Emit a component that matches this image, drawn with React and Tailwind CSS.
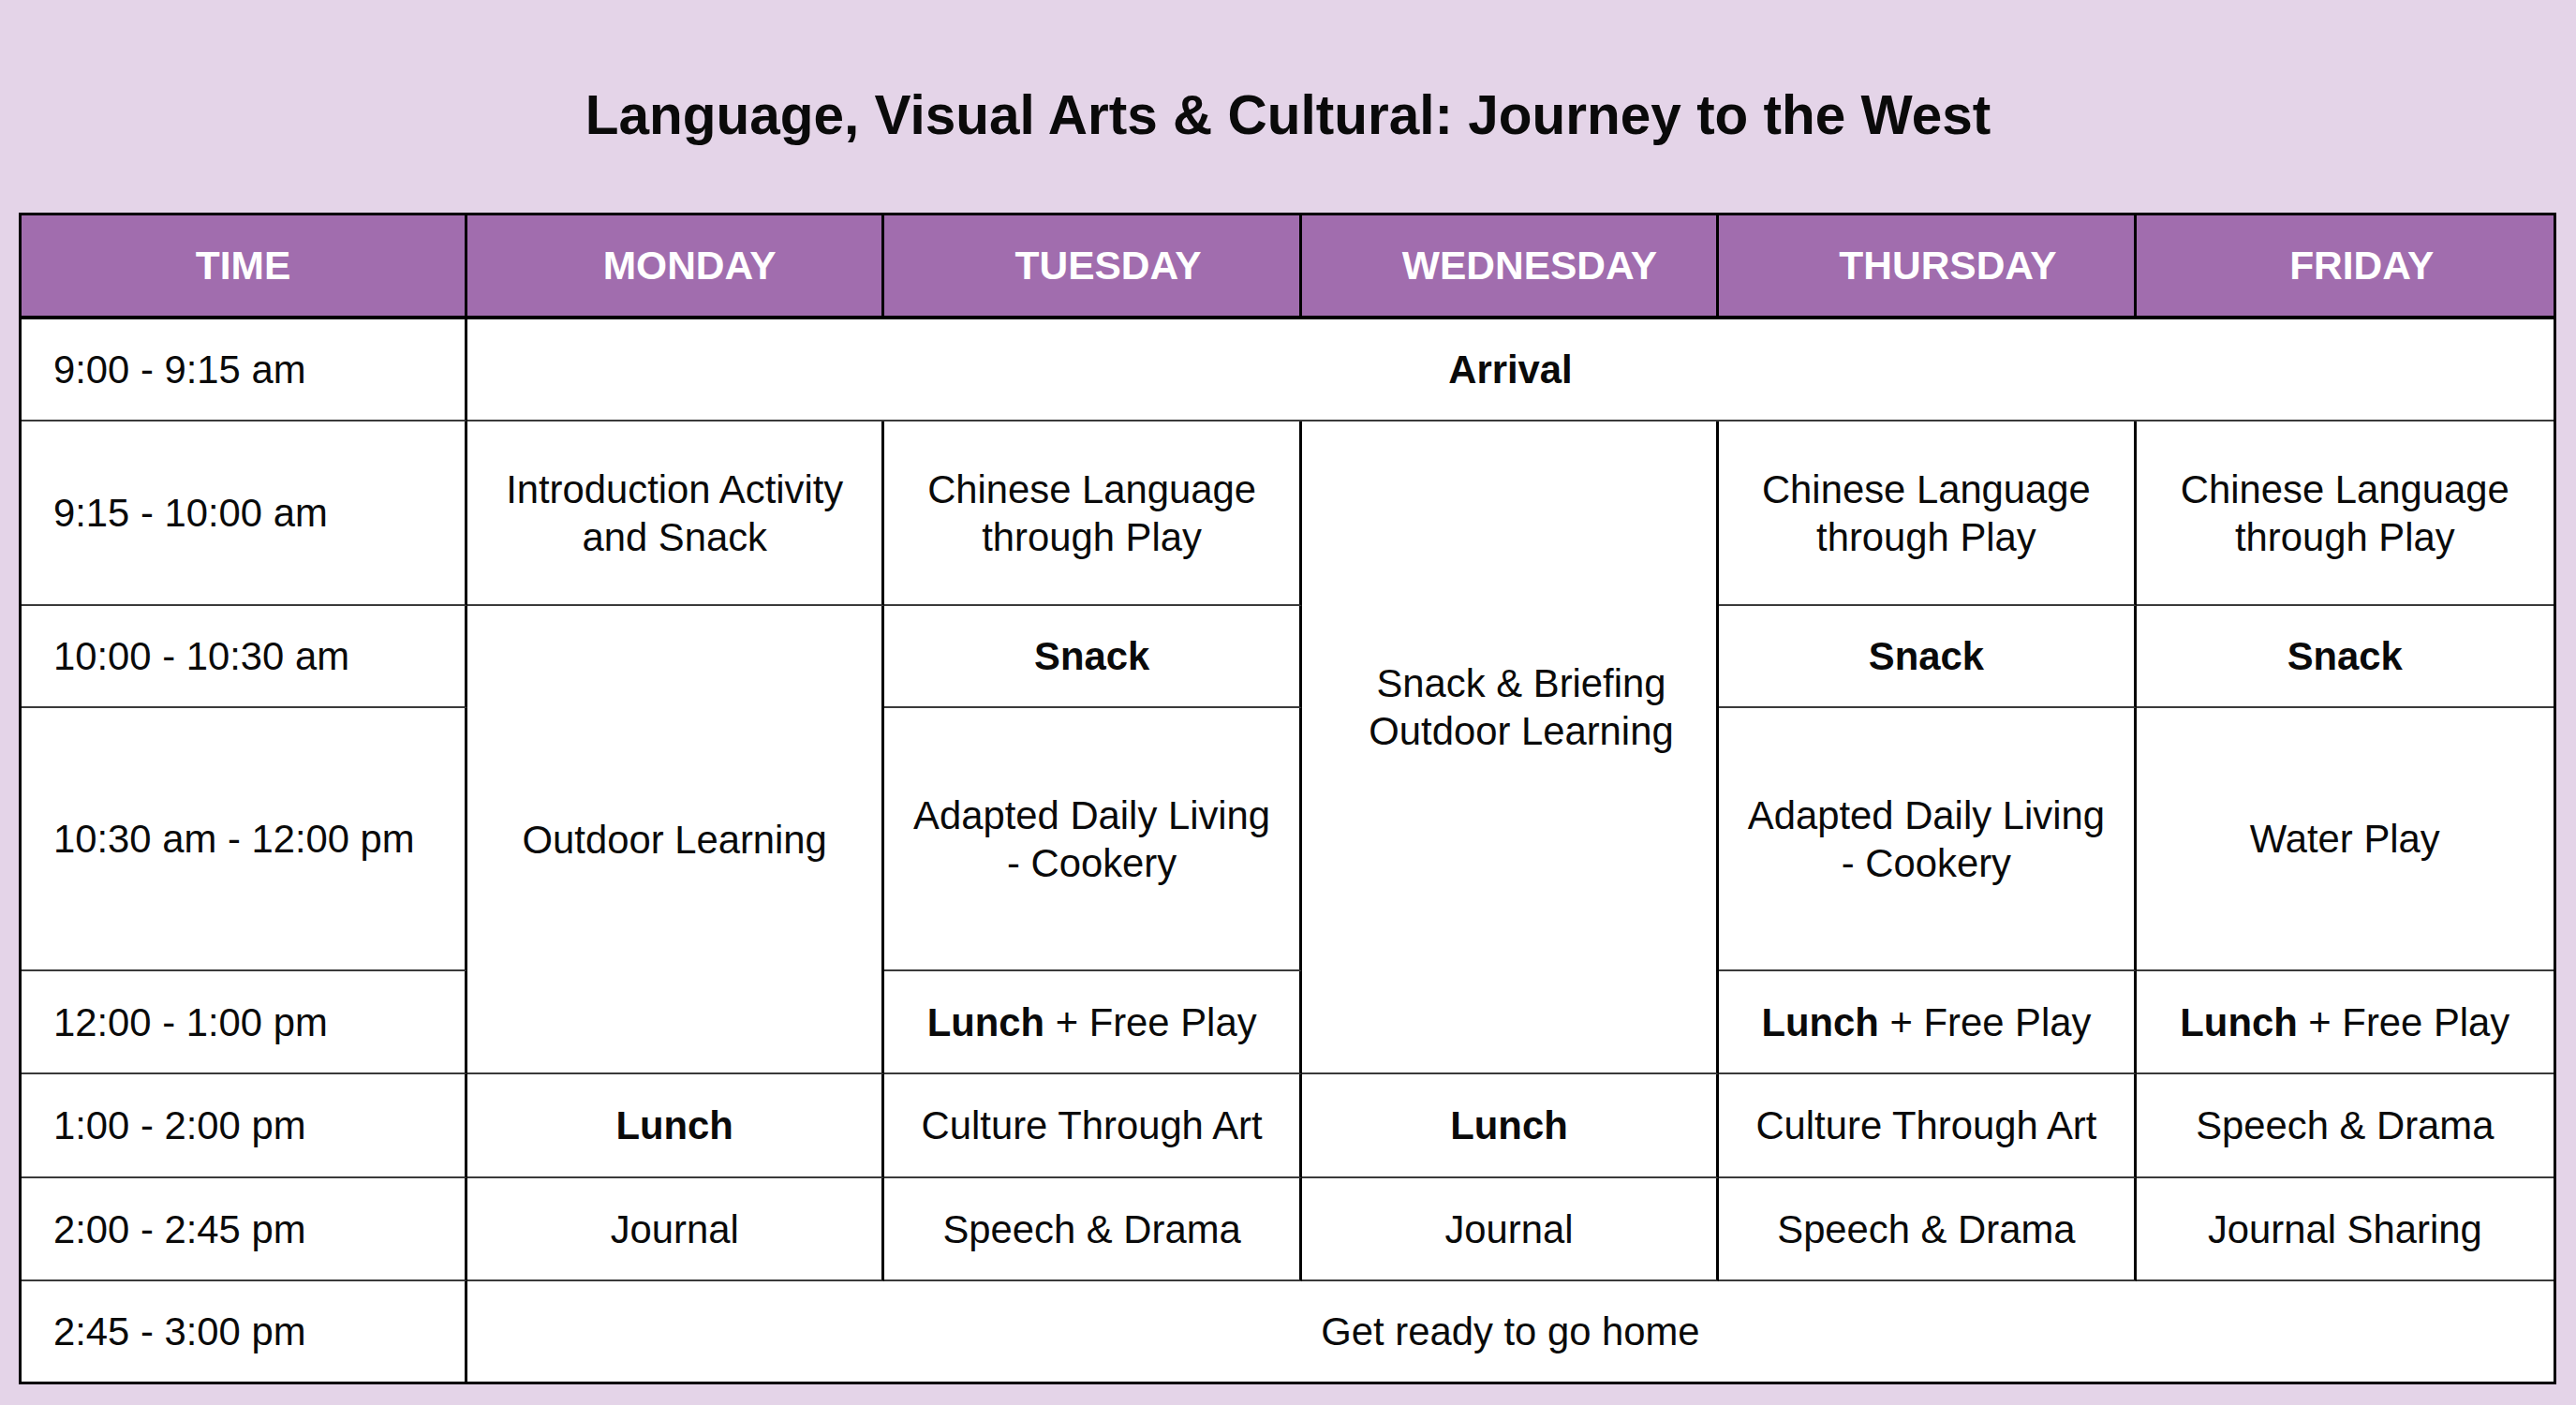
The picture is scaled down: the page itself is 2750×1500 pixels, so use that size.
export default function App() {
  const cell =
    "flex items-center justify-center text-center border-b-2 border-b-[#3a3a3a] border-r-[3px] border-r-black";
  const cellLast =
    "flex items-center justify-center text-center border-b-2 border-b-[#3a3a3a]";
  const time =
    "flex items-center pl-[34px] border-b-2 border-b-[#3a3a3a] border-r-[3px] border-r-black";
  const head =
    "bg-[#a16dae] text-white font-bold text-[42.5px] flex items-center justify-center border-b-[4px] border-b-black border-r-[3px] border-r-black";
  const headLast =
    "bg-[#a16dae] text-white font-bold text-[42.5px] flex items-center justify-center border-b-[4px] border-b-black";

  return (
    <div className="w-[2750px] h-[1500px] overflow-hidden bg-[#e4d4e8] font-['Liberation_Sans',Arial,sans-serif] text-[#0a0a0a] pt-[90px]">
      <h1 className="text-center text-[58.5px] leading-[66px] font-bold">
        Language, Visual Arts &amp; Cultural: Journey to the West
      </h1>
      <div className="ml-[20px] mt-[71px] w-[2709px] grid grid-cols-[476px_repeat(5,minmax(0,1fr))] grid-rows-[111px_109px_197px_109px_281px_110px_111px_110px_107px] border-[3px] border-black bg-white text-[41.8px] leading-[51px]">
        {/* Header */}
        <div className={head}>TIME</div>
        <div className={head + " pl-[32px]"}>MONDAY</div>
        <div className={head + " pl-[35px]"}>TUESDAY</div>
        <div className={head + " pl-[44px]"}>WEDNESDAY</div>
        <div className={head + " pl-[46px]"}>THURSDAY</div>
        <div className={headLast + " pl-[36px]"}>FRIDAY</div>

        {/* Row 1 */}
        <div className={time}>9:00 - 9:15 am</div>
        <div className={cellLast + " col-span-5 font-bold"}>Arrival</div>

        {/* Row 2 */}
        <div className={time}>9:15 - 10:00 am</div>
        <div className={cell}>
          Introduction Activity
          <br />
          and Snack
        </div>
        <div className={cell}>
          Chinese Language
          <br />
          through Play
        </div>
        <div className={cell + " row-span-4 pb-[86px] pl-[26px]"}>
          Snack &amp; Briefing
          <br />
          Outdoor Learning
        </div>
        <div className={cell}>
          Chinese Language
          <br />
          through Play
        </div>
        <div className={cellLast}>
          Chinese Language
          <br />
          through Play
        </div>

        {/* Row 3 */}
        <div className={time}>10:00 - 10:30 am</div>
        <div className={cell + " row-span-3"}>Outdoor Learning</div>
        <div className={cell + " font-bold"}>Snack</div>
        <div className={cell + " font-bold"}>Snack</div>
        <div className={cellLast + " font-bold"}>Snack</div>

        {/* Row 4 */}
        <div className={time}>10:30 am - 12:00 pm</div>
        <div className={cell}>
          Adapted Daily Living
          <br />
          - Cookery
        </div>
        <div className={cell}>
          Adapted Daily Living
          <br />
          - Cookery
        </div>
        <div className={cellLast}>Water Play</div>

        {/* Row 5 */}
        <div className={time}>12:00 - 1:00 pm</div>
        <div className={cell}>
          <span>
            <b>Lunch</b> + Free Play
          </span>
        </div>
        <div className={cell}>
          <span>
            <b>Lunch</b> + Free Play
          </span>
        </div>
        <div className={cellLast}>
          <span>
            <b>Lunch</b> + Free Play
          </span>
        </div>

        {/* Row 6 */}
        <div className={time}>1:00 - 2:00 pm</div>
        <div className={cell + " font-bold"}>Lunch</div>
        <div className={cell}>Culture Through Art</div>
        <div className={cell + " font-bold"}>Lunch</div>
        <div className={cell}>Culture Through Art</div>
        <div className={cellLast}>Speech &amp; Drama</div>

        {/* Row 7 */}
        <div className={time}>2:00 - 2:45 pm</div>
        <div className={cell}>Journal</div>
        <div className={cell}>Speech &amp; Drama</div>
        <div className={cell}>Journal</div>
        <div className={cell}>Speech &amp; Drama</div>
        <div className={cellLast}>Journal Sharing</div>

        {/* Row 8 */}
        <div className="flex items-center pl-[34px] border-r-[3px] border-r-black">
          2:45 - 3:00 pm
        </div>
        <div className="flex items-center justify-center text-center col-span-5">
          Get ready to go home
        </div>
      </div>
    </div>
  );
}
